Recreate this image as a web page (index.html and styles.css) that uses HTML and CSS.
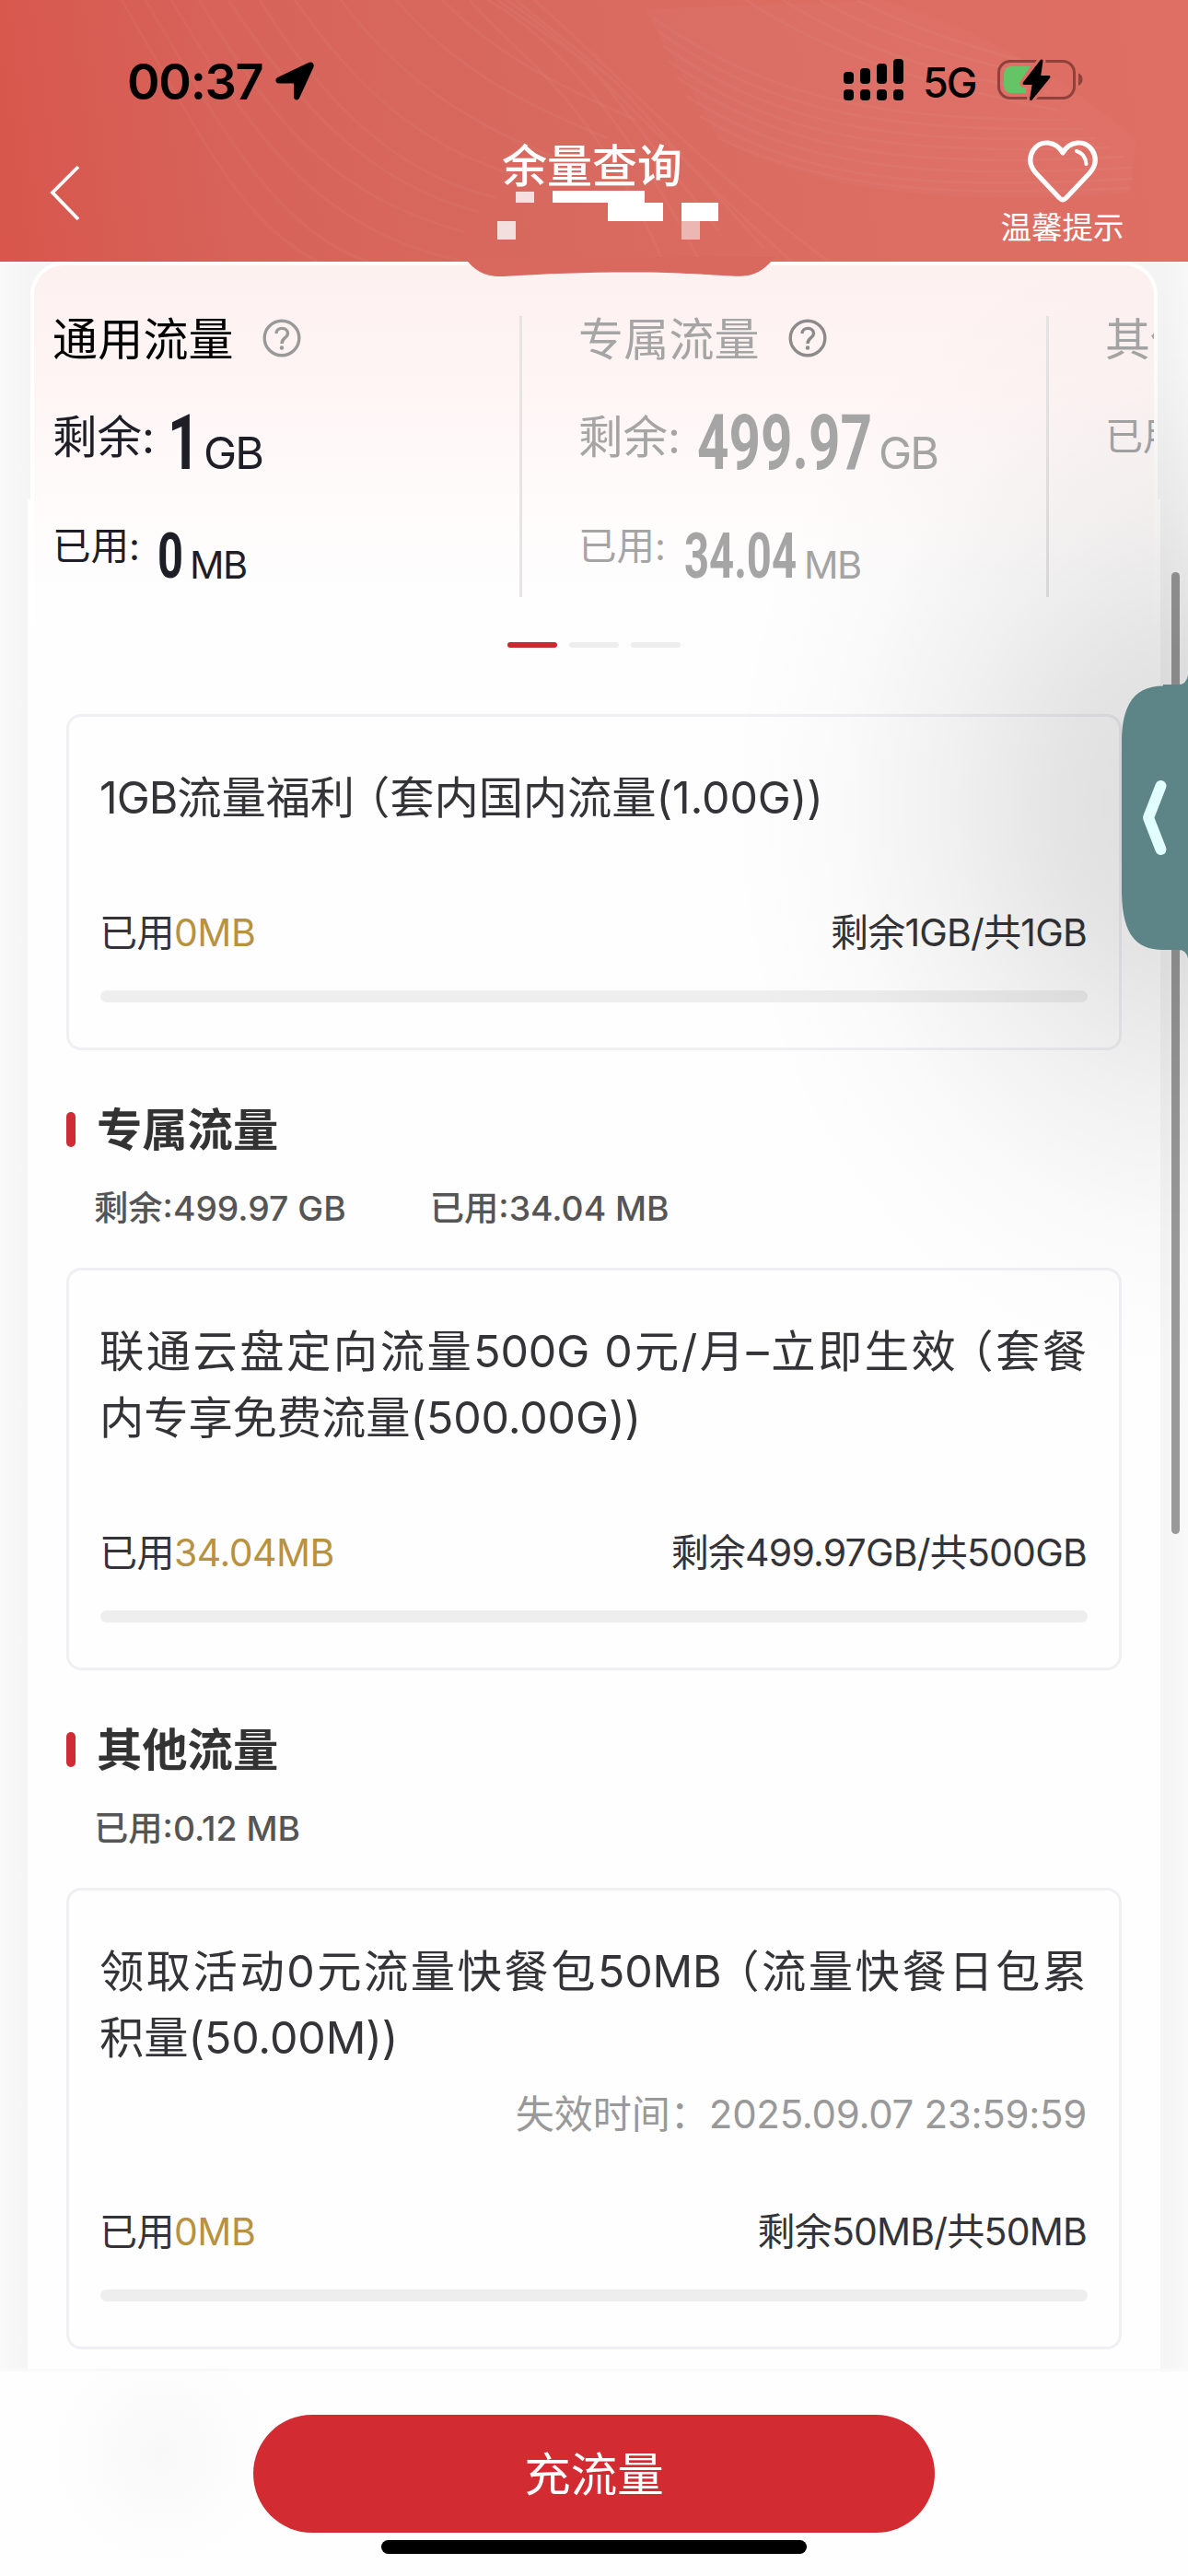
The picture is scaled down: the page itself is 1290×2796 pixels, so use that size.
FILE: index.html
```html
<!DOCTYPE html>
<html lang="zh-CN">
<head>
<meta charset="utf-8">
<title>余量查询</title>
<link rel="stylesheet" href="styles.css">
</head>
<body>
<div class="screen">
  <header class="header">
    <svg class="waves" viewBox="0 0 1290 284" fill="none" stroke="#fff" stroke-width="3" stroke-opacity=".035">
      <path d="M132 0C220 150 260 240 345 284M158 0C240 140 300 250 400 284M186 0C270 140 340 250 505 284M216 0C290 120 350 210 505 252M248 0C320 110 400 200 520 230M282 0C350 110 430 190 540 215M320 0C390 100 460 160 560 190M370 0C430 80 500 130 600 170M430 0C490 70 560 110 660 150M480 0C540 60 600 90 690 130"/>
      <path d="M510 0C560 60 640 100 720 284M530 0C600 40 680 130 760 284M550 0C640 60 720 160 860 284M580 0C650 60 760 180 900 284M540 0L640 70L780 250M560 0L670 90L830 270"/>
      <path d="M710 20C840 110 960 130 1160 130M715 34C840 124 960 142 1175 140M720 50C850 140 970 156 1190 150M726 66C850 154 980 168 1205 160M735 84C860 168 990 182 1220 170M745 104C870 184 1000 194 1228 182M760 126C880 198 1010 206 1230 194M780 150C900 206 1020 214 1228 204M810 0C900 60 1000 90 1150 120M850 0C930 50 1010 80 1140 100M890 0C960 40 1030 60 1130 84M930 0C990 30 1050 50 1110 66"/>
      <path d="M960 0C1060 30 1150 80 1234 152L1226 210C1080 220 900 220 780 150L700 10Z" fill="#fff" fill-opacity=".02" stroke="none"/>
    </svg>
    <div class="status">
      <span class="time">00:37</span>
      <svg class="locate" viewBox="0 0 42 42"><path d="M40.600 1.400C42 2.800 42 4.500 41.300 6.200L26 39.500C24.600 42.500 20.500 42 20 38.500V23.500H4C0 23.500-1 19 2.500 17L36 1C37.800 .2 39.500 .2 40.600 1.400Z"/></svg>
      <svg class="signal" viewBox="0 0 66 46">
        <g><rect x="0" y="14" width="11" height="13" rx="4"/><rect x="18" y="10" width="11" height="17" rx="4"/><rect x="36" y="5" width="11" height="22" rx="4"/><rect x="54" y="0" width="11" height="27" rx="4"/><rect x="0" y="33" width="11" height="12" rx="4"/><rect x="18" y="33" width="11" height="12" rx="4"/><rect x="36" y="33" width="11" height="12" rx="4"/><rect x="54" y="33" width="11" height="12" rx="4"/></g>
      </svg>
      <span class="network">5G</span>
      <svg class="battery" viewBox="0 0 94 46">
        <rect x="1.500" y="2.500" width="82" height="40" rx="12.500" fill="none" stroke="#8f413b" stroke-width="3"/>
        <path d="M88 15.500C94 17 94 27 88 29Z" fill="#8f413b"/>
        <path d="M16 8H36L26 23H31V37H16Q7 37 7 28V17Q7 8 16 8Z" fill="#65c466"/>
        <path d="M48 2L29 26.500H39.500L36.500 43.500L56 19.500H45.500Z" fill="#000" stroke="#dc6e64" stroke-width="9" stroke-linejoin="round"/>
        <path d="M48 2L29 26.500H39.500L36.500 43.500L56 19.500H45.500Z" fill="#000" stroke="#000" stroke-width="3" stroke-linejoin="round"/>
      </svg>
    </div>
    <div class="navbar">
      <svg class="back" viewBox="0 0 34 62"><path d="M32 3L4 31L32 60" fill="none" stroke="#fff" stroke-width="3.800"/></svg>
      <h1 class="title">余量查询</h1>
      <div class="tips">
        <svg class="heart" viewBox="0 0 76 70"><path d="M38 16C31 3 14 1 6 13C1 21 2 30 9 38L34.500 65Q38 68.500 41.500 65L67 38C74 30 75 21 70 13C62 1 45 3 38 16Z" fill="none" stroke="#fff" stroke-width="5.200" stroke-linejoin="round"/><path d="M53 14C60 16 63 22 63.500 28" fill="none" stroke="#fff" stroke-width="4" stroke-linecap="round"/></svg>
        <span>温馨提示</span>
      </div>
    </div>
    <svg class="mosaic" viewBox="0 0 340 100">
      <path d="M8 79V84C16 93 26 101 47 100C110 96 190 94 245 97C280 98 300 101 312 99C324 97 332 90 342 79Z" fill="#d9685f"/>
      <path d="M60 8h20v12h-20z" fill="#f6e0df"/><path d="M100 7h100v13h20v20h-60v-20h-60zM240 20h40v20h-40z" fill="#fff"/>
      <path d="M240 40h20v20h-20z" fill="#ecb6b2"/><path d="M40 40h20v20h-20z" fill="#f3dfde"/>
    </svg>
  </header>

  <main class="content">
    <section class="summary">
      <div class="slide active">
        <h2>通用流量 <svg class="help" viewBox="0 0 42 42"><circle cx="21" cy="21" r="18.800"/><path d="M15 16C15 8.500 27.500 8.500 27.500 16C27.500 21 21 20.500 21 27"/><circle class="dot" cx="21" cy="31.500" r="1.500"/></svg></h2>
        <p class="left"><span>剩余:</span><svg class="num n1" viewBox="0 0 28 60"><text x="-4" y="60" textLength="35" lengthAdjust="spacingAndGlyphs">1</text></svg><b>GB</b></p>
        <p class="used"><span>已用:</span><svg class="num n0" viewBox="0 0 26 50"><text x="-1" y="49" textLength="28" lengthAdjust="spacingAndGlyphs">0</text></svg><b>MB</b></p>
      </div>
      <div class="slide">
        <h2>专属流量 <svg class="help" viewBox="0 0 42 42"><circle cx="21" cy="21" r="18.800"/><path d="M15 16C15 8.500 27.500 8.500 27.500 16C27.500 21 21 20.500 21 27"/><circle class="dot" cx="21" cy="31.500" r="1.500"/></svg></h2>
        <p class="left"><span>剩余:</span><svg class="num n499" viewBox="0 0 190 60"><text x="0" y="60" textLength="190" lengthAdjust="spacingAndGlyphs">499.97</text></svg><b>GB</b></p>
        <p class="used"><span>已用:</span><svg class="num n34" viewBox="0 0 122 50"><text x="0" y="49" textLength="122" lengthAdjust="spacingAndGlyphs">34.04</text></svg><b>MB</b></p>
      </div>
      <div class="slide">
        <h2>其他流量</h2>
        <p class="left small"><span>已用:</span></p>
      </div>
    </section>
    <div class="pager"><i class="on"></i><i></i><i></i></div>

    <article class="card">
      <h3><span class="en">1GB</span>流量福利<span class="open">（</span>套内国内流量(1.00G))</h3>
      <div class="row"><span>已用<em>0MB</em></span><span>剩余1GB/共1GB</span></div>
      <div class="bar"></div>
    </article>

    <h2 class="section">专属流量</h2>
    <div class="totals"><span>剩余:499.97 GB</span><span>已用:34.04 MB</span></div>
    <article class="card">
      <h3><span class="line">联通云盘定向流量500G 0元/月–立即生效<span class="open">（</span>套餐</span><span>内专享免费流量(500.00G))</span></h3>
      <div class="row"><span>已用<em>34.04MB</em></span><span>剩余499.97GB/共500GB</span></div>
      <div class="bar"></div>
    </article>

    <h2 class="section">其他流量</h2>
    <div class="totals"><span>已用:0.12 MB</span></div>
    <article class="card">
      <h3><span class="line">领取活动0元流量快餐包50MB<span class="open">（</span>流量快餐日包累</span><span>积量(50.00M))</span></h3>
      <p class="expire">失效时间：<span>2025.09.07 23:59:59</span></p>
      <div class="row"><span>已用<em>0MB</em></span><span>剩余50MB/共50MB</span></div>
      <div class="bar"></div>
    </article>
  </main>

  <footer class="footer">
    <button class="buy">充流量</button>
    <div class="home"></div>
  </footer>

  <div class="scrollbar"></div>
  <div class="shade"></div>
  <svg class="drawer" viewBox="0 0 72 312"><path d="M72 3Q70 13 62 13H45V14.500C16 14.500 1 32 0 72V240C1 282 14 301 45 301H62Q70 301 72 310Z" fill="#5d8486"/><path d="M42.500 123L29 157.500L42.500 192" fill="none" stroke="#e0fffe" stroke-width="12" stroke-linecap="round" stroke-linejoin="round"/></svg>
</div>
</body>
</html>
```
FILE: styles.css
```css
* { box-sizing: border-box; margin: 0; padding: 0; }
body { font-family: Inter, "Noto Sans CJK SC", sans-serif; background: #f6f6f6; color: #333338; }
h1, h2, h3, b, em { font-weight: 400; font-style: normal; }
svg { display: block; flex: none; }
.screen { position: relative; width: 1290px; height: 2796px; overflow: hidden; display: flex; flex-direction: column; background: linear-gradient(90deg, #f9f9f9, #f5f5f5 30px, #f5f5f5 1265px, #f9f9f9); }

.header { position: relative; z-index: 2; flex: none; height: 284px; background: linear-gradient(82deg, #d8564b 0%, #d7635a 20%, #d8695f 45%, #dc6d63 70%, #df6f65 100%); }
.waves { position: absolute; inset: 0; }
.status { position: relative; display: flex; align-items: flex-start; height: 145px; padding: 64px 0 0 138px; color: #000; }
.time { width: 161px; font-weight: 600; font-size: 54px; line-height: 49px; letter-spacing: -1.300px; }
.locate { width: 42px; height: 42px; margin-top: 3px; }
.signal { width: 66px; height: 46px; margin-left: 575px; }
.network { width: 81px; margin-left: 20px; font-size: 45px; line-height: 52px; font-weight: 500; letter-spacing: -2px; }
.battery { width: 94px; height: 46px; }
.navbar { position: relative; display: grid; grid-template-columns: 200px 1fr 200px; height: 139px; }
.back { width: 34px; height: 62px; margin: 33px 0 0 53px; }
.title { padding: 8px 4px 0 0; color: #fff; font-size: 49px; line-height: 56px; text-align: center; font-weight: 500; }
.tips { display: flex; flex-direction: column; align-items: center; color: #fff; font-size: 33.500px; line-height: 40px; margin-right: 73px; white-space: nowrap; }
.heart { width: 76px; height: 70px; margin: 5px 0 7px; }
.mosaic { position: absolute; left: 500px; top: 200px; width: 340px; height: 100px; overflow: visible; }

.content { position: relative; height: 2287px; flex: none; margin: 0 30px; background: linear-gradient(#fefefe, #fefefe) 0 258px no-repeat; }
.summary { display: flex; height: 395px; margin: 0 3px; padding: 55px 0 0 20px; overflow: hidden; border: 4px solid #fff; border-bottom: 0; border-radius: 36px 36px 0 0; background: linear-gradient(#fdf1f0, #fff5f5 35%, #fffafa 60%, #fefefe 92%); }
.slide { flex: none; width: 572px; height: 305px; color: #a5a5a5; white-space: nowrap; }
.slide + .slide { border-left: 3px solid #e6e4e5; padding-left: 61px; }
.slide:first-child { width: 507px; }
.slide h2 { display: flex; font-size: 49px; line-height: 51px; letter-spacing: .2px; }
.active { color: #1e1e26; }
.active h2 { color: #000; }
.help { width: 42px; height: 42px; margin: 3px 0 0 31px; fill: none; stroke: #999; stroke-width: 3.400; }
.slide:not(.active) .help { stroke: #8c8a8a; }
.help .dot { fill: #999; stroke-width: 1.500; }
.left, .used { display: flex; align-items: flex-start; }
.left { margin-top: 55px; height: 72px; font-size: 48.500px; line-height: 51px; }
.used { margin-top: 55px; font-size: 41.500px; line-height: 34px; }
.small { font-size: 41px; line-height: 49px; }
.left span { width: 129px; }
.used span { width: 115px; }
.num { overflow: visible; fill: currentColor; font: 700 84px Roboto, sans-serif; }
.used .num { font-size: 68px; margin-top: 2px; }
.n1 { width: 28px; height: 60px; }
.n0 { width: 26px; height: 50px; }
.n499 { width: 190px; height: 60px; }
.n34 { width: 122px; height: 50px; }
.left b { margin: 17px 0 0 7px; letter-spacing: -2px; }
.used b { margin: 20px 0 0 8px; letter-spacing: -1.500px; }
.pager { display: flex; justify-content: center; gap: 13px; margin-top: 18px; }
.pager i { width: 54px; height: 6px; border-radius: 3px; background: #eee; }
.pager .on { background: #c9292f; }

.card { margin: 72px 42px 0; padding: 52px 35px 49px 33px; border: 3px solid #efeff4; border-radius: 16px; }
.card h3 { font-size: 48.300px; line-height: 72px; white-space: nowrap; letter-spacing: -.1px; }
.card h3 > span:not(.en):not(.open) { display: block; }
.en { letter-spacing: -1px; }
.line { text-align: justify; text-align-last: justify; }
.open { margin-left: -10px; }
.row { display: flex; justify-content: space-between; margin-top: 80px; font-size: 41px; line-height: 60px; letter-spacing: -.5px; }
.row span:last-child { letter-spacing: -.8px; }
.row em { color: #b8923f; }
.bar { height: 13px; margin: 33px -1px 0 1px; border-radius: 7px; background: #eee; }
.expire { color: #999; font-size: 42px; line-height: 60px; margin-top: 17px; text-align: right; }
.expire span { letter-spacing: -.3px; }
.expire + .row { margin-top: 67px; }
.section { display: flex; align-items: center; gap: 23px; margin: 56px 42px 0; font-size: 49.300px; line-height: 60px; font-weight: 700; color: #333; }
.section::before { content: ""; width: 10px; height: 38px; border-radius: 5px; background: #d02c35; }
.totals { display: flex; gap: 91px; margin: 30px 0 0 72px; color: #555; font-size: 37.300px; font-weight: 500; line-height: 51px; }
.totals + .card { margin-top: 39px; }

.footer { position: relative; flex: 1; display: flex; flex-direction: column; align-items: center; border-top: 3px solid #f9f9f9; background: radial-gradient(circle at 175px 90px, #f8f8f8, #fefefe 120px); }
.buy { width: 740px; height: 128px; margin-top: 47px; padding-bottom: 7px; border: 0; border-radius: 64px; background: #d32b32; color: #fff; font: 400 50.500px "Noto Sans CJK SC", sans-serif; }
.home { width: 462px; height: 15px; margin-top: 8px; border-radius: 8px; background: #000; }

.scrollbar { position: absolute; left: 1272px; top: 621px; width: 9px; height: 1044px; border-radius: 5px; background: #999; }
.shade { position: absolute; left: 690px; top: 284px; width: 600px; height: 1250px; background: radial-gradient(ellipse 500px 620px at 600px 590px, rgba(0,0,0,.135), rgba(0,0,0,.1) 28%, rgba(0,0,0,.05) 53%, rgba(0,0,0,.015) 76%, transparent); }
.drawer { position: absolute; left: 1218px; top: 730px; width: 72px; height: 312px; }
```
